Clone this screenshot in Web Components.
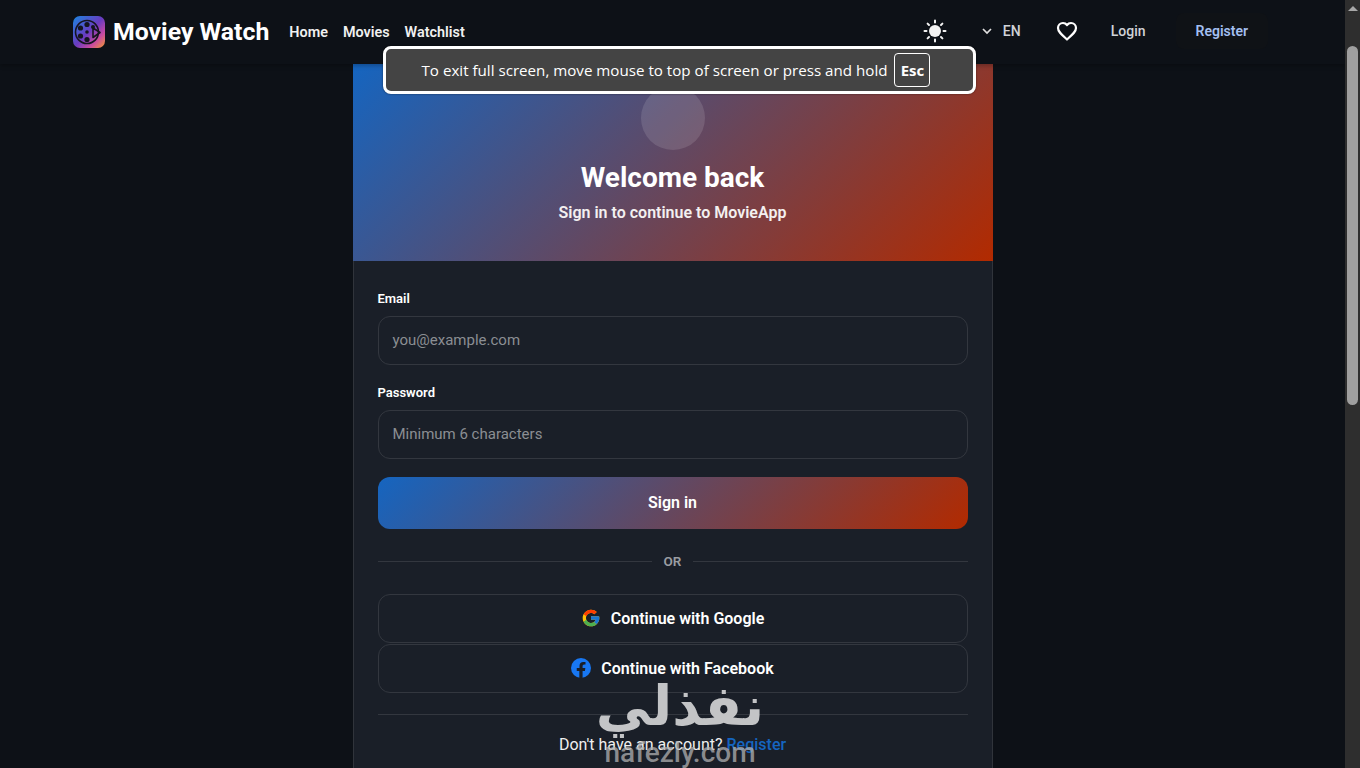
<!DOCTYPE html>
<html><head><meta charset="utf-8"><style>
html,body{margin:0;height:100%;overflow:hidden;background:#0d1117}
body{font-family:Roboto,"Liberation Sans",sans-serif}
</style></head><body>
<mw-app></mw-app>
<script>
function def(name,html,init){customElements.define(name,class extends HTMLElement{constructor(){super();this.attachShadow({mode:'open'}).innerHTML=html;}connectedCallback(){init&&init(this)}})}
const GRAD='linear-gradient(135deg,#1565c0 0%,#b22a00 100%)';
def('mw-logo',`<style>:host{display:flex;align-items:center;gap:8px}svg{display:block}span{font:700 24.800px/32px Roboto,sans-serif;color:#fff}</style>
<svg width="32" height="32" viewBox="0 0 32 32"><defs><linearGradient id="g" x1="0" y1="0" x2="1" y2="1"><stop offset="0" stop-color="#1a86e0"/><stop offset=".5" stop-color="#6a3bc0"/><stop offset=".75" stop-color="#c84aa0"/><stop offset="1" stop-color="#f59a30"/></linearGradient></defs><rect width="32" height="32" rx="7" fill="url(#g)"/><circle cx="14" cy="16" r="11.500" fill="none" stroke="#15151f" stroke-width="1.600"/><g fill="#15151f"><circle cx="14" cy="8.500" r="2.600"/><circle cx="7.500" cy="12" r="2.600"/><circle cx="7.500" cy="20" r="2.600"/><circle cx="14" cy="23.500" r="2.600"/><circle cx="20" cy="11" r="2"/><circle cx="14" cy="16" r="1.800"/></g><path d="M20 12l7 4.500-7 5z" fill="none" stroke="#15151f" stroke-width="1.600" stroke-linejoin="round"/></svg><span>Moviey Watch</span>`);
def('mw-nav',`<style>:host{display:flex;gap:15px;margin-left:20px;padding-top:2px}span{font:600 14.400px/20px Roboto,sans-serif;color:#f0f0f0}</style><span>Home</span><span>Movies</span><span>Watchlist</span>`);
def('mw-actions',`<style>:host{display:flex;align-items:center;height:100%;margin-top:-2px}svg{display:block}
.t{font:500 14px/20px Roboto,sans-serif;color:#d0d3d8}
.sun{margin-right:34px}.lang{display:flex;align-items:center;gap:10px;margin-right:34px}.heart{margin-right:32px}
.reg{color:#a3bff0;font-weight:600;padding:8px 20px;margin-left:30px;margin-right:0;border-radius:8px;background:#0f1216}</style>
<svg class="sun" width="24" height="24" viewBox="0 0 24 24" fill="#f2f2f2"><circle cx="12" cy="12" r="6"/><g stroke="#f2f2f2" stroke-width="2" stroke-linecap="round"><path d="M12 1.500v2M12 20.500v2M1.500 12h2M20.500 12h2M4.600 4.600l1.400 1.400M18 18l1.400 1.400M4.600 19.400L6 18M18 6l1.400-1.400"/></g></svg>
<div class="lang"><svg width="12" height="12" viewBox="0 0 12 12" fill="none" stroke="#e0e0e0" stroke-width="1.700"><path d="M2 4l4 4 4-4"/></svg><span class="t">EN</span></div>
<svg class="heart" width="24" height="24" viewBox="0 0 24 24" fill="none" stroke="#fff" stroke-width="2.200" stroke-linejoin="round"><path d="M12 20.500l-1.300-1.200C5.800 14.900 3 12.300 3 9a5 5 0 0 1 5-5c1.600 0 3.100.8 4 2 .9-1.200 2.400-2 4-2a5 5 0 0 1 5 5c0 3.300-2.800 5.900-7.700 10.300z"/></svg>
<span class="t">Login</span><span class="t reg">Register</span>`);
def('mw-header',`<style>:host{display:flex;align-items:center;height:64px;box-sizing:border-box;padding:0 77px 0 73px;background:#0d1117;box-shadow:0 2px 4px rgba(0,0,0,.25);position:relative;z-index:2}.sp{flex:1}</style>
<mw-logo></mw-logo><mw-nav></mw-nav><div class="sp"></div><mw-actions></mw-actions>`);
def('mw-field',`<style>:host{display:block;margin-bottom:18px}label{display:block;font:600 13px/18px Roboto,sans-serif;color:#fff;padding-top:1px;margin-bottom:8px}
.i{height:47px;box-sizing:content-box;border:1px solid #33373f;border-radius:12px;display:flex;align-items:center;padding-left:14px;font:400 15px/45px Roboto,sans-serif;color:#8b8e93}.i span{display:block}</style><label></label><div class="i"><span></span></div>`,el=>{const s=el.shadowRoot;s.querySelector('label').textContent=el.getAttribute('label');s.querySelector('.i span').textContent=el.getAttribute('placeholder')});
def('mw-social',`<style>:host{display:flex;align-items:center;justify-content:center;gap:10px;height:46px;padding-bottom:1px;box-sizing:content-box;border:1px solid #33373f;border-radius:12px;font:600 16px Roboto,sans-serif;color:#fff}</style><slot></slot>`);
def('mw-divider',`<style>:host{display:flex;align-items:center;gap:12px;font:600 13.500px/16px Roboto,sans-serif;color:#9a9da2;margin:24px 0 25px}i{flex:1;height:1px;background:#33373f}</style><i></i>OR<i></i>`);
def('mw-card',`<style>:host{display:block;width:640px;box-sizing:border-box;margin:0 auto;background:#1a1f28;border:solid #30343b;border-width:0 1px;height:704px}
.hero{height:197px;box-sizing:border-box;background:${GRAD};display:flex;flex-direction:column;align-items:center;padding-top:22px;color:#fff;margin:0 -1px}
.av{width:64px;height:64px;border-radius:50%;background:rgba(255,255,255,.12)}
h1{font:700 28px/36px Roboto,sans-serif;margin:10px 0 0}
p{font:600 16px/24px Roboto,sans-serif;margin:5px 0 0;color:#f3f0f0}
.body{padding:28px 24px 0}
.btn{height:52px;box-sizing:border-box;padding-bottom:2px;border-radius:12px;background:${GRAD};display:flex;align-items:center;justify-content:center;font:600 16px Roboto,sans-serif;color:#fff}
.stack{display:flex;flex-direction:column;gap:1px}
.hr{height:1px;background:#33373f;margin:21px 0 20px}
.foot{text-align:center;font:400 16px/20px Roboto,sans-serif;color:#f0f0f0}.foot b{font-weight:500;color:#1565c0}</style>
<div class="hero"><div class="av"></div><h1>Welcome back</h1><p>Sign in to continue to MovieApp</p></div>
<div class="body"><mw-field label="Email" placeholder="you@example.com"></mw-field><mw-field label="Password" placeholder="Minimum 6 characters"></mw-field>
<div class="btn">Sign in</div><mw-divider></mw-divider>
<div class="stack"><mw-social><svg width="20" height="20" viewBox="0 0 48 48"><path fill="#FFC107" d="M43.600 20.100H42V20H24v8h11.300C33.700 32.700 29.200 36 24 36c-6.600 0-12-5.400-12-12s5.400-12 12-12c3.100 0 5.800 1.200 8 3l5.700-5.700C34 6.100 29.300 4 24 4 13 4 4 13 4 24s9 20 20 20 20-9 20-20c0-1.300-.1-2.700-.4-3.900z"/><path fill="#FF3D00" d="M6.300 14.700l6.600 4.800C14.700 15.100 19 12 24 12c3.100 0 5.800 1.200 8 3l5.700-5.700C34 6.100 29.300 4 24 4 16.300 4 9.700 8.300 6.300 14.700z"/><path fill="#4CAF50" d="M24 44c5.200 0 9.900-2 13.400-5.200l-6.200-5.200C29.200 35.100 26.700 36 24 36c-5.200 0-9.600-3.300-11.300-7.900l-6.500 5C9.500 39.600 16.200 44 24 44z"/><path fill="#1976D2" d="M43.600 20.100H42V20H24v8h11.300c-.8 2.200-2.200 4.200-4.100 5.600l6.200 5.200C37 39.200 44 34 44 24c0-1.300-.1-2.700-.4-3.900z"/></svg>Continue with Google</mw-social>
<mw-social><svg width="20" height="20" viewBox="0 0 24 24"><circle cx="12" cy="12" r="12" fill="#1877f2"/><path fill="#1a1f28" d="M16.700 15.500l.5-3.500h-3.300V9.800c0-1 .5-1.900 2-1.900h1.500v-3s-1.400-.2-2.700-.2c-2.700 0-4.500 1.600-4.500 4.600V12H6.900v3.500h3.100V24h3.900v-8.500z"/></svg>Continue with Facebook</mw-social></div>
<div class="hr"></div><div class="foot">Don't have an account? <b>Register</b></div></div>`);
def('mw-toast',`<style>:host{position:absolute;left:383px;top:46px;width:593px;height:48px;box-sizing:border-box;border:3px solid #fff;border-radius:8px;background:#444;display:flex;align-items:center;justify-content:center;gap:7px;padding-right:7px;font:400 15.150px "Open Sans",sans-serif;color:#fff;box-shadow:0 0 2px rgba(0,0,0,.6);z-index:5}
kbd{box-sizing:border-box;width:36px;height:34px;border:1px solid #fff;border-radius:4px;display:flex;align-items:center;justify-content:center;font:700 15px "Open Sans",sans-serif}</style><span>To exit full screen, move mouse to top of screen or press and hold</span><kbd>Esc</kbd>`);
def('mw-watermark',`<style>:host{position:absolute;left:580px;top:672px;width:200px;height:96px;overflow:hidden;z-index:4;color:#c3c4c6;text-align:center;pointer-events:none}
.a{font:700 55px/68px "DejaVu Sans",sans-serif;direction:rtl}.b{font:500 28px/26px Roboto,sans-serif;color:rgba(176,176,176,.75);margin-top:0}</style><div class="a">نفذلي</div><div class="b">nafezly.com</div>`);
def('mw-scrollbar',`<style>:host{display:block;width:15px;flex:none;height:768px;background:#2e2e2e;position:relative;z-index:3}
.up{width:0;height:0;border:5px solid transparent;border-top:0;border-bottom:5px solid #a8a8a8;margin:6px auto 0}
.th{width:11px;height:359px;margin:35px auto 0;background:#9f9f9f;border-radius:6px}</style><div class="up"></div><div class="th"></div>`);
def('mw-app',`<style>:host{display:flex;height:768px;overflow:hidden;position:relative}.m{flex:1;min-width:0;overflow:hidden}</style>
<div class="m"><mw-header></mw-header><mw-card></mw-card></div><mw-scrollbar></mw-scrollbar><mw-toast></mw-toast><mw-watermark></mw-watermark>`);
</script></body></html>
